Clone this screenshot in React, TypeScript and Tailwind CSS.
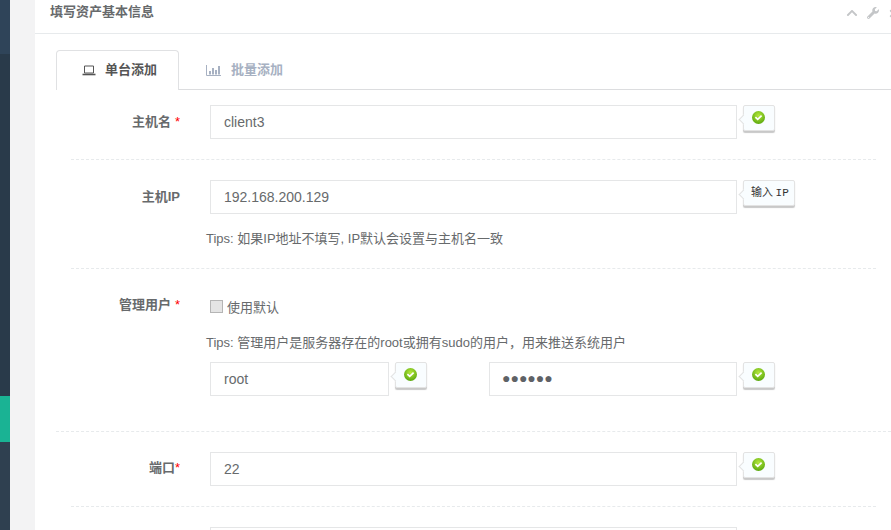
import { FaChevronUp, FaTimes, FaWrench } from "react-icons/fa";

function ValidOk() {
  return (
    <svg width="13" height="13" viewBox="0 0 13 13">
      <defs>
        <radialGradient id="ok" cx="50%" cy="35%" r="65%">
          <stop offset="0%" stopColor="#b5e83c" />
          <stop offset="100%" stopColor="#5aa80e" />
        </radialGradient>
      </defs>
      <circle cx="6.5" cy="6.5" r="6.5" fill="url(#ok)" />
      <path d="M3.4 6.2 L5.7 8.4 L9.6 4.6" fill="none" stroke="#fff" strokeWidth="1.7" />
    </svg>
  );
}

function Hint({ text }: { text?: string }) {
  return (
    <div className={`relative ml-[6px] flex h-[26px] shrink-0 items-start rounded-[2px] border border-[#e3e3e3] bg-[#f9fdff] pt-[5px] shadow-[0_2px_1px_#c8c8c8] ${text ? "pl-[7px] pr-[5px]" : "pl-[8px] pr-[9px]"}`}>
      <span className="absolute left-[-4px] top-[10px] h-[7px] w-[7px] rotate-45 border-b border-l border-[#e3e3e3] bg-[#f9fdff]" />
      {text ? (
        <span className="relative text-[11px] leading-[14px] text-[#333] [word-spacing:-4px] [font-family:'Liberation_Mono','Noto_Sans_CJK_SC',monospace]">
          {text}
        </span>
      ) : (
        <span className="relative">
          <ValidOk />
        </span>
      )}
    </div>
  );
}

function Field({ value, className = "", dots }: { value: string; className?: string; dots?: boolean }) {
  return (
    <div className={`flex h-[34px] shrink-0 items-center border border-[#e5e6e7] bg-white pl-[13px] text-[14px] text-[#676a6c] ${className}`}>
      {dots ? <span className="mb-[1px] ml-[-1px] text-[#5f6266]">{value}</span> : value}
    </div>
  );
}

function Label({ text, star, spaced, low }: { text: string; star?: boolean; spaced?: boolean; low?: boolean }) {
  return (
    <div className={`w-[124px] shrink-0 text-right text-[13px] font-bold leading-[18px] text-[#676a6c] ${low ? "pt-[8px]" : "pt-[7px]"}`}>
      {text}
      {star && <span className={`font-normal text-[#f00] ${spaced ? "ml-[4px]" : ""}`}>*</span>}
    </div>
  );
}

function Divider({ wide }: { wide?: boolean }) {
  return <div className={`border-t border-dashed border-[#e7eaec] ${wide ? "mr-[-15px]" : "ml-[15px]"}`} />;
}

export default function App() {
  return (
    <div className="flex h-[530px] w-[891px] overflow-hidden bg-[#f3f3f4] text-[#676a6c] [font-family:'Liberation_Sans','Noto_Sans_CJK_SC',sans-serif]">
      {/* Sidebar */}
      <aside className="flex w-[10px] shrink-0 flex-col bg-[#2f4050]">
        <div className="h-[54px] bg-[#2f4459]" />
        <div className="h-[342px] bg-[#293a4a]" />
        <div className="h-[46px] bg-[#1ab394]" />
      </aside>

      {/* Panel */}
      <main className="ml-[25px] flex-1 overflow-hidden bg-white">
        <div className="flex h-[34px] items-start justify-between border-b border-[#e7eaec] pl-[15px] pt-[3px]">
          <h5 className="text-[13px] font-bold leading-[18px] text-[#676a6c]">填写资产基本信息</h5>
          <div className="mr-[-8px] flex items-center gap-[9px] pt-[4px] text-[#c4c6c8]">
            <FaChevronUp className="h-[12px] w-[12px]" />
            <FaWrench className="h-[12px] w-[12px]" />
            <FaTimes className="h-[11px] w-[11px]" />
          </div>
        </div>

        <div className="pl-[21px] pt-[16px]">
          {/* Tabs */}
          <div className="flex h-[40px] border-b border-[#dcdddf]">
            <div className="mb-[-1px] h-[40px] w-[123px] rounded-t-[4px] border border-b-0 border-[#e0e1e3] bg-white pl-[25px] pt-[10px] text-[13px] font-bold leading-[18px] text-[#555]">
              <div className="flex items-center">
                <svg width="14" height="11" viewBox="0 0 14 11" className="mr-[9px]">
                  <path d="M2.5 1 H11.5 V8 H2.5 Z" fill="none" stroke="#555" strokeWidth="1" />
                  <path d="M0.5 9.5 H13.5" stroke="#555" strokeWidth="1.6" />
                </svg>
                单台添加
              </div>
            </div>
            <div className="pl-[27px] pt-[11px] text-[13px] font-bold leading-[18px] text-[#a7b1c2]">
              <div className="flex items-center">
                <svg width="15" height="11" viewBox="0 0 15 11" className="mr-[10px]">
                  <path d="M0.5 0 V10.5 H15" fill="none" stroke="#a7b1c2" />
                  <path d="M3 6 H5 V9.5 H3 Z M6 3 H8 V9.5 H6 Z M9 5 H11 V9.5 H9 Z M12 1 H14 V9.5 H12 Z" fill="#a7b1c2" />
                </svg>
                批量添加
              </div>
            </div>
          </div>

          <div className="pt-[15px]">
            {/* Hostname */}
            <div className="flex pb-[20px]">
              <Label text="主机名" star spaced low />
              <Field value="client3" className="ml-[30px] w-[527px]" />
              <Hint />
            </div>
            <div className="pr-[15px]"><Divider /></div>

            {/* IP */}
            <div className="flex pt-[20px]">
              <Label text="主机IP" low />
              <Field value="192.168.200.129" className="ml-[30px] w-[527px]" />
              <Hint text="输入 IP" />
            </div>
            <p className="ml-[150px] pb-[20px] pt-[16px] text-[13px] leading-[18px] text-[#676a6c]">
              Tips: 如果IP地址不填写, IP默认会设置与主机名一致
            </p>
            <div className="pr-[15px]"><Divider /></div>

            {/* Admin user */}
            <div className="flex pt-[20px]">
              <Label text="管理用户" star spaced />
              <div>
                <label className="ml-[30px] flex h-[37px] items-start text-[13px] leading-[18px] text-[#676a6c]">
                  <span className="mr-[4px] mt-[11px] h-[13px] w-[13px] border border-[#b5b5b5] bg-[#e4e4e4]" />
                  <span className="mt-[10px]">使用默认</span>
                </label>
                <p className="ml-[26px] pt-[8px] text-[13px] leading-[18px] text-[#676a6c]">
                  Tips: 管理用户是服务器存在的root或拥有sudo的用户，用来推送系统用户
                </p>
                <div className="ml-[30px] flex pt-[10px]">
                  <Field value="root" className="w-[179px]" />
                  <Hint />
                  <Field value="●●●●●●" dots className="ml-[62px] w-[248px]" />
                  <Hint />
                </div>
              </div>
            </div>
            <div className="pt-[35px]"><Divider wide /></div>

            {/* Port */}
            <div className="flex pb-[20px] pt-[20px]">
              <Label text="端口" star />
              <Field value="22" className="ml-[30px] w-[527px]" />
              <Hint />
            </div>
            <div className="pr-[15px]"><Divider /></div>

            <div className="flex pt-[20px]">
              <div className="w-[124px] shrink-0" />
              <Field value="" className="ml-[30px] w-[527px]" />
            </div>
          </div>
        </div>
      </main>
    </div>
  );
}
